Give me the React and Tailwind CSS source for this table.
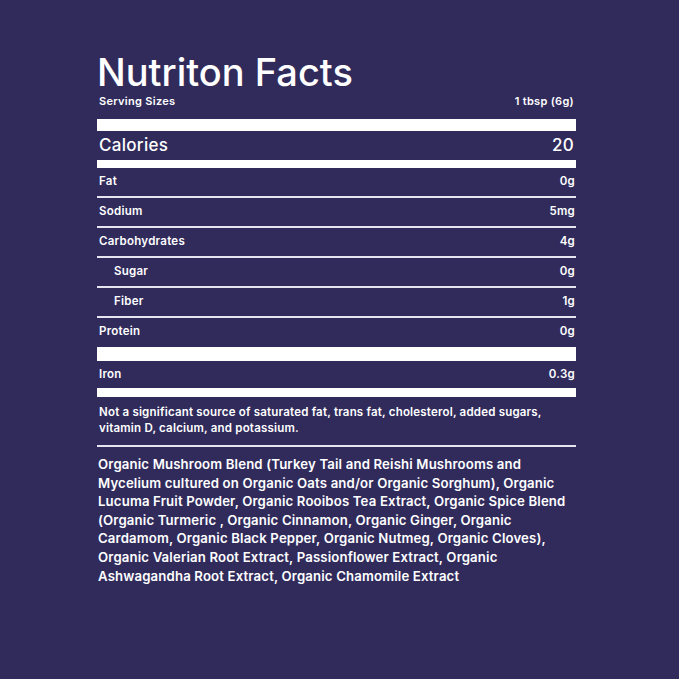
const ROWS = [
  { label: 'Fat', value: '0g' },
  { label: 'Sodium', value: '5mg' },
  { label: 'Carbohydrates', value: '4g' },
  { label: 'Sugar', value: '0g', indent: true },
  { label: 'Fiber', value: '1g', indent: true },
  { label: 'Protein', value: '0g', last: true },
]

export default function App() {
  return (
    <div className="w-[679px] h-[679px] bg-[#312b5c] text-white font-['Inter',sans-serif] flex justify-center">
      <div className="w-[479px] ml-[-6px] pt-[54px]">
        <h1 className="text-[38px] leading-[36px] font-medium">Nutriton Facts</h1>
        <div className="flex justify-between text-[11px] font-semibold leading-[13px] mt-[5px] px-[2px] tracking-[0.3px]">
          <span>Serving Sizes</span>
          <span>1 tbsp (6g)</span>
        </div>
        <div className="h-[12px] bg-white mt-[11px]" />
        <div className="flex justify-between items-center h-[29px] px-[2px] text-[17px] font-medium tracking-[0.3px]">
          <span>Calories</span>
          <span>20</span>
        </div>
        <div className="h-[8px] bg-white" />
        {ROWS.map(r => (
          <div key={r.label}>
            <div className={`flex justify-between items-center h-[28px] pr-[1px] text-[11.5px] font-semibold tracking-[0.25px] ${r.indent ? 'pl-[17px]' : 'pl-[2px]'}`}>
              <span>{r.label}</span>
              <span>{r.value}</span>
            </div>
            {!r.last && <div className="h-[2px] bg-[#e6e4ef]" />}
          </div>
        ))}
        <div className="h-[14px] bg-white mt-[1px]" />
        <div className="flex justify-between items-center h-[27px] pl-[2px] pr-[1px] text-[11.5px] font-semibold tracking-[0.25px]">
          <span>Iron</span>
          <span>0.3g</span>
        </div>
        <div className="h-[9px] bg-white" />
        <p className="text-[11.5px] leading-[16px] font-semibold tracking-[0.2px] pl-[2px] pr-[20px] pt-[7px] pb-[9px]">
          Not a significant source of saturated fat, trans fat, cholesterol, added sugars, vitamin D, calcium, and potassium.
        </p>
        <div className="h-[2px] bg-[#e6e4ef]" />
        <p className="text-[13.2px] leading-[18.6px] font-semibold tracking-[0.15px] pl-[1px] pr-[8px] pt-[8px]">
          Organic Mushroom Blend (Turkey Tail and Reishi Mushrooms and Mycelium cultured on Organic Oats and/or Organic Sorghum), Organic Lucuma Fruit Powder, Organic Rooibos Tea Extract, Organic Spice Blend (Organic Turmeric , Organic Cinnamon, Organic Ginger, Organic Cardamom, Organic Black Pepper, Organic Nutmeg, Organic Cloves), Organic Valerian Root Extract, Passionflower Extract, Organic Ashwagandha Root Extract, Organic Chamomile Extract
        </p>
      </div>
    </div>
  )
}
